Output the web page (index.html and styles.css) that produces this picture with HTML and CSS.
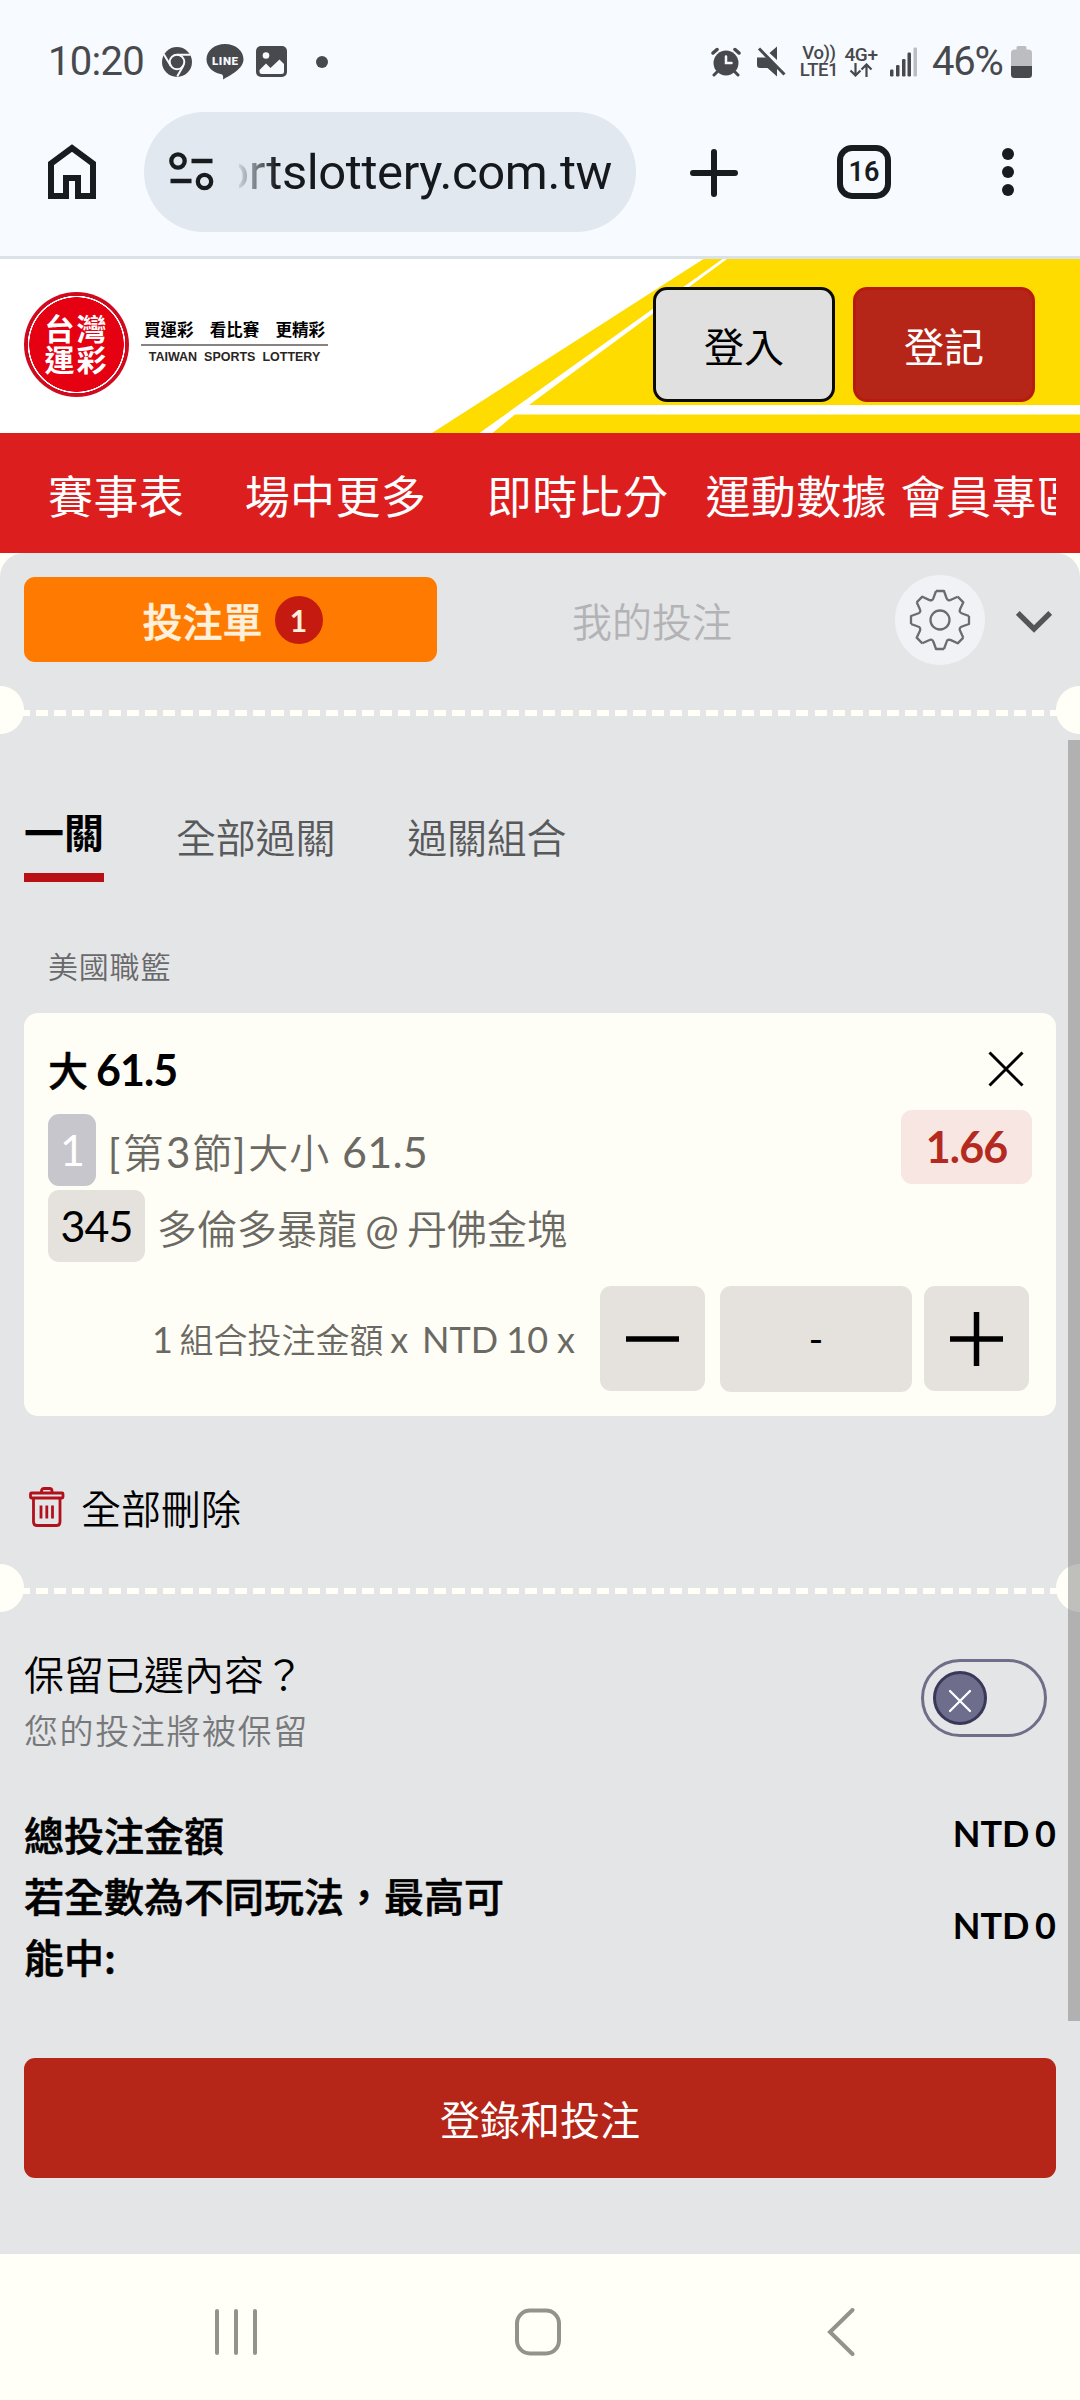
FILE: index.html
```html
<!DOCTYPE html>
<html lang="zh-Hant">
<head>
<meta charset="utf-8">
<title>台灣運彩</title>
<link rel="stylesheet" href="styles.css">
</head>
<body>
<div class="screen">
  <div class="statusbar">
    <span class="clock">10:20</span>
    <svg class="st-chrome" width="30" height="30" viewBox="0 0 30 30"><circle cx="15" cy="15" r="15" fill="#48494c"/><circle cx="15" cy="15" r="7.3" fill="none" stroke="#f7faff" stroke-width="2"/><path d="M15 7.7H28.5M8.700 18.700L1.800 7.200M21.300 18.700L15.200 29.500" stroke="#f7faff" stroke-width="2" fill="none"/></svg>
    <svg class="st-line" width="38" height="36" viewBox="0 0 38 36"><path d="M19 0C8.500 0 0.500 6.800 0.500 15.300c0 7.200 5.800 13 14 14.700 2.500.5 3 1.500 2.500 5.500C24 31.500 37.500 25 37.500 15.300 37.500 6.800 29.500 0 19 0z" fill="#48494c"/><text x="19" y="20.500" text-anchor="middle" textLength="26" class="line-word">LINE</text></svg>
    <svg class="st-photo" width="31" height="31" viewBox="0 0 31 31"><rect width="31" height="31" rx="5" fill="#48494c"/><circle cx="10" cy="9.500" r="3.300" fill="#f7faff"/><path d="M3.500 24L10 17.500l4.500 4.500 9-8.500 4.500 4.500v7.500q0 2.500-2.500 2.500h-19.500q-2.500 0-2.500-2.500z" fill="#f7faff"/></svg>
    <span class="st-dot"></span>
    <svg class="st-alarm" width="30" height="30" viewBox="0 0 30 30" fill="none" stroke="#48494c" stroke-linecap="round"><circle cx="15" cy="16" r="12.500" fill="#48494c" stroke="none"/><path d="M2 6L6 2.500M28 6L24 2.500" stroke-width="3.500"/><path d="M6 25l-3 3M24 25l3 3" stroke-width="3"/><path d="M15 9.500v6.500h5.500" stroke="#f7faff" stroke-width="2.500"/></svg>
    <svg class="st-mute" width="31" height="31" viewBox="0 0 31 31"><path d="M1 11.500h9L21 21.500v9L11.500 22H4q-3 0-3-3zM13.500 7L21 0.500V14z" fill="#48494c"/><path d="M3 2.500L28.500 28.500" stroke="#48494c" stroke-width="3"/></svg>
    <div class="st-volte"><span>Vo))</span><span>LTE1</span></div>
    <div class="st-net"><span>4G+</span><svg width="24" height="14" viewBox="0 0 24 14" fill="none" stroke="#48494c" stroke-width="2.200"><path d="M6.500 0v12M1.500 7.500l5 5 5-5M17.500 14V1.500M12.500 6.500l5-5 5 5"/></svg></div>
    <svg class="st-signal" width="28" height="30" viewBox="0 0 28 30" fill="#48494c"><rect x="0" y="22.500" width="3.500" height="7" rx="1.200"/><rect x="6" y="18" width="3.500" height="11.500" rx="1.200"/><rect x="12" y="12" width="3.500" height="17.500" rx="1.200"/><rect x="17.500" y="5.500" width="3.500" height="24" rx="1.200"/><rect x="23.500" y="0.500" width="3.500" height="29" rx="1.200" fill="#bcbdc1"/></svg>
    <span class="percent">46%</span>
    <svg class="st-batt" width="21" height="32" viewBox="0 0 21 32"><path d="M5.500 3.500V1.500q0-1.500 1.500-1.500h7q1.500 0 1.500 1.500v2h2q3.500 0 3.500 3.500v13H0V7q0-3.500 3.500-3.500z" fill="#bcbdc1"/><path d="M0 20h21v8.500q0 3.500-3.500 3.500h-14q-3.500 0-3.500-3.500z" fill="#48494c"/></svg>
  </div>

  <div class="toolbar">
    <svg class="tb-home" width="48" height="56" viewBox="0 0 48 56"><path d="M3 52V19.500L24 4l21 15.500V52H30V34H18v18z" fill="none" stroke="#191c1f" stroke-width="6"/></svg>
    <div class="omnibox">
      <svg width="46" height="40" viewBox="0 0 46 40" fill="none" stroke="#191c1f"><circle cx="9" cy="9" r="6.700" stroke-width="4.300"/><circle cx="35.500" cy="29.500" r="6.700" stroke-width="4.300"/><path d="M22.500 9h21M1.500 29h21" stroke-width="4.500"/></svg>
      <div class="url"><span>ortslottery.com.tw</span></div>
    </div>
    <svg class="tb-plus" width="48" height="48" viewBox="0 0 48 48"><path d="M24 3v42M3 24h42" stroke="#191c1f" stroke-width="6" stroke-linecap="round"/></svg>
    <div class="tab-count">16</div>
    <svg class="tb-more" width="12" height="48" viewBox="0 0 12 48" fill="#191c1f"><circle cx="6" cy="6" r="6"/><circle cx="6" cy="24" r="6"/><circle cx="6" cy="42" r="6"/></svg>
  </div>

  <header class="site-header">
    <svg class="header-art" width="648" height="174" viewBox="0 0 648 174"><path d="M0 174L271.500 0H648V174z" fill="#fedc00"/><path d="M47.500 174L290.500 0h4.500L97 146H648v9.500H83L60.500 174z" fill="#fff"/></svg>
    <div class="logo-seal"><span>台灣</span><span>運彩</span></div>
    <div class="slogan">
      <div class="slogan-zh"><span>買運彩</span><span>看比賽</span><span>更精彩</span></div>
      <div class="slogan-en">TAIWAN&nbsp; SPORTS&nbsp; LOTTERY</div>
    </div>
    <div class="auth">
      <button class="btn btn-login">登入</button>
      <button class="btn btn-register">登記</button>
    </div>
  </header>

  <nav class="main-nav">
    <div class="nav-clip">
      <a>賽事表</a><a>場中更多</a><a>即時比分</a><a>運動數據</a><a>會員專區</a>
    </div>
  </nav>

  <main class="slip-wrap">
    <div class="slip">
      <div class="slip-tabs">
        <div class="slip-tab-active">投注單<span class="count">1</span></div>
        <div class="slip-tab">我的投注</div>
        <div class="gear">
          <svg width="64" height="64" viewBox="-32 -32 64 64" fill="none" stroke="#6b6c6f" stroke-width="2.300" stroke-linejoin="round">
            <defs><path id="tooth" d="M-4-29H4L6.500-22Q8-18.500 11-20.200L17.700-23.300"/></defs>
            <use href="#tooth"/><use href="#tooth" transform="rotate(45)"/><use href="#tooth" transform="rotate(90)"/><use href="#tooth" transform="rotate(135)"/><use href="#tooth" transform="rotate(180)"/><use href="#tooth" transform="rotate(225)"/><use href="#tooth" transform="rotate(270)"/><use href="#tooth" transform="rotate(315)"/>
            <circle r="9.500"/>
          </svg>
        </div>
        <svg class="chevron" width="36" height="22" viewBox="0 0 36 22"><path d="M1.800 2L18 18 34.200 2" fill="none" stroke="#545558" stroke-width="5.300"/></svg>
      </div>

      <div class="divider"></div>

      <div class="modes">
        <span class="mode mode-on">一關</span><span class="mode">全部過關</span><span class="mode">過關組合</span>
      </div>

      <div class="league">美國職籃</div>

      <section class="card">
        <div class="card-title">
          <span class="pick">大 <b>61.5</b></span>
          <svg width="36" height="36" viewBox="0 0 36 36"><path d="M1.500 1.500l33 33M34.500 1.500l-33 33" stroke="#000" stroke-width="3"/></svg>
        </div>
        <div class="card-legs">
          <div class="legs">
            <div class="leg"><span class="tag tag-one">1</span><span class="leg-text market"><i class="bracket">[</i>第<i class="period">3</i>節<i class="bracket">]</i>大小 <i class="total-line">61.5</i></span></div>
            <div class="leg"><span class="tag tag-num">345</span><span class="leg-text teams">多倫多暴龍 <i class="at">@</i> 丹佛金塊</span></div>
          </div>
          <div class="odds">1.66</div>
        </div>
        <div class="stake">
          <div class="stake-label"><i>1</i> 組合投注金額 <i>x</i></div><div class="stake-unit">NTD 10</div><div class="stake-x">x</div>
          <div class="step minus"><svg width="53" height="54" viewBox="0 0 53 54"><path d="M0 27h53" stroke="#000" stroke-width="5.500"/></svg></div>
          <div class="amount">-</div>
          <div class="step plus"><svg width="53" height="54" viewBox="0 0 53 54"><path d="M0 27h53M26.500 0v54" stroke="#000" stroke-width="5.500"/></svg></div>
        </div>
      </section>

      <div class="clear-all">
        <svg width="36" height="40" viewBox="0 0 36 40" fill="none" stroke="#b0111a" stroke-width="2.800" stroke-linejoin="round"><rect x="1.500" y="6" width="32.500" height="5" rx="1"/><path d="M12.500 6V4q0-2.500 2.500-2.500h5.500q2.500 0 2.500 2.500v2M4.500 11v24q0 3.500 3.500 3.500h19.500q3.500 0 3.500-3.500V11M12 18.500v13M17.800 18.500v13M23.500 18.500v13"/></svg>
        <span>全部刪除</span>
      </div>

      <div class="divider"></div>

      <div class="keep">
        <div class="keep-text"><div class="keep-title">保留已選內容？</div><div class="keep-sub">您的投注將被保留</div></div>
        <div class="toggle"><div class="knob"><svg width="24" height="24" viewBox="0 0 24 24"><path d="M2 2l20 20M22 2L2 22" stroke="#fff" stroke-width="2.300" stroke-linecap="round"/></svg></div></div>
      </div>

      <div class="totals">
        <div class="total"><span class="total-label">總投注金額</span><span class="total-value">NTD 0</span></div>
        <div class="total"><span class="total-label">若全數為不同玩法，最高可能中:</span><span class="total-value">NTD 0</span></div>
      </div>

      <button class="submit">登錄和投注</button>
      <div class="scrollbar"></div>
    </div>
  </main>

  <div class="sysnav">
    <svg width="42" height="48" viewBox="0 0 42 48"><path d="M2 3v42M21 3v42M40 3v42" stroke="#93938e" stroke-width="4" stroke-linecap="round"/></svg>
    <svg width="46" height="48" viewBox="0 0 46 48"><rect x="2" y="2.500" width="42" height="43" rx="13" fill="none" stroke="#93938e" stroke-width="4"/></svg>
    <svg width="28" height="48" viewBox="0 0 28 48"><path d="M25.500 2L3 24l22.500 22" fill="none" stroke="#93938e" stroke-width="4" stroke-linecap="round"/></svg>
  </div>
</div>
</body>
</html>
```

FILE: styles.css
```css
* { box-sizing: border-box; }
body { margin: 0; background: #fffef7; }
svg { display: block; flex: none; }
i { font-style: normal; }
button { font: inherit; margin: 0; padding: 0; cursor: pointer; }

.screen {
  width: 1080px;
  height: 2400px;
  overflow: hidden;
  font-family: "Noto Sans CJK TC", "Lato", sans-serif;
  font-size: 40px;
  color: #000;
}

/* system status bar */
.statusbar {
  display: flex;
  align-items: center;
  height: 104px;
  padding: 19px 0 0 48px;
  background: #f7faff;
  color: #48494c;
  font-family: Roboto, sans-serif;
}
.clock { width: 114px; font-size: 40px; letter-spacing: -0.7px; line-height: 46px; }
.st-line { margin: 0 0 0 14px; }
.st-photo { margin-left: 12px; }
.st-dot { width: 12px; height: 12px; margin-left: 29px; border-radius: 50%; background: #48494c; }
.st-alarm { margin-left: 383px; }
.st-mute { margin-left: 15px; }
.line-word { font: 900 11.500px Roboto, sans-serif; fill: #f7faff; }
.st-volte, .st-net {
  display: flex;
  flex-direction: column;
  align-items: center;
  font-weight: 500;
  font-size: 18.500px;
  line-height: 17px;
  letter-spacing: -0.4px;
}
.st-volte { width: 38px; margin-left: 13px; }
.st-net { width: 34px; margin-left: 6px; }
.st-net span { font-size: 19px; }
.st-signal { margin-left: 12px; }
.percent { width: 81px; margin-left: 14px; font-size: 40px; letter-spacing: -1.2px; line-height: 46px; }
.st-batt { margin-left: -2px; }

/* browser toolbar */
.toolbar {
  display: flex;
  align-items: center;
  height: 155px;
  padding: 0 0 20px 48px;
  background: #f7faff;
  border-bottom: 3px solid #dbe1e9;
}
.tb-home { margin-top: 4px; }
.omnibox {
  display: flex;
  align-items: center;
  width: 492px;
  height: 120px;
  margin: 4px 0 0 48px;
  padding-left: 25px;
  border-radius: 60px;
  background: #e2e8f0;
}
.url {
  display: flex;
  justify-content: flex-end;
  width: 373px;
  margin-left: 24px;
  padding-top: 1px;
  overflow: hidden;
  color: #15181c;
  font: 400 49px/68px Roboto, sans-serif;
  letter-spacing: -0.4px;
  -webkit-mask-image: linear-gradient(90deg, rgba(0,0,0,.1), #000 38px);
  mask-image: linear-gradient(90deg, rgba(0,0,0,.1), #000 38px);
}
.tb-plus { margin: 5px 0 0 54px; }
.tab-count {
  width: 54px;
  height: 54px;
  margin: 4px 0 0 99px;
  border: 6px solid #191c1f;
  border-radius: 15px;
  color: #191c1f;
  text-align: center;
  font: 600 27px/43px Roboto, sans-serif;
}
.tb-more { margin: 4px 0 0 111px; }

/* site header */
.site-header {
  position: relative;
  display: flex;
  align-items: flex-start;
  height: 174px;
  padding-left: 24px;
  background: #fff;
}
.header-art { position: absolute; right: 0; top: 0; }
.logo-seal {
  display: flex;
  flex-direction: column;
  align-items: center;
  width: 105px;
  height: 105px;
  margin-top: 33px;
  padding-top: 20px;
  border-radius: 50%;
  background: radial-gradient(circle, #e50012 0 47px, #fff 47.500px 48.500px, #d00a1c 49px);
  color: #fff;
  font-weight: 700;
  font-size: 30px;
  line-height: 31px;
  letter-spacing: 2px;
}
.slogan { width: 187px; margin: 59px 0 0 12px; }
.slogan-zh {
  display: flex;
  justify-content: space-between;
  height: 28px;
  padding: 0 3px;
  border-bottom: 2px solid #85827f;
  font-weight: 700;
  font-size: 16.500px;
  line-height: 23px;
}
.slogan-en {
  margin-top: 4px;
  text-align: center;
  white-space: nowrap;
  color: #2a2523;
  font: 700 12.500px/15px "Liberation Sans", sans-serif;
}
.auth { position: relative; display: flex; gap: 18px; margin: 28px 0 0 325px; }
.btn {
  width: 182px;
  height: 115px;
  padding-top: 1px;
  border: 3px solid #0b0b05;
  border-radius: 14px;
  background: #e0e0e0;
  color: #000;
  font-size: 40px;
}
.btn-register { border-color: #b71b10; background: #b52619; color: #fff; }

.main-nav { height: 120px; padding: 0 24px; background: #dc1e1f; }
.nav-clip {
  display: flex;
  overflow: hidden;
  height: 120px;
  padding: 2px 0 0 24px;
  color: #fff;
  font-size: 45px;
  line-height: 120px;
  letter-spacing: 0.400px;
  white-space: nowrap;
}
.nav-clip a { flex: none; margin-right: 60.500px; }
.nav-clip a:nth-child(3) { margin-right: 37px; }
.nav-clip a:nth-child(4) { margin-right: 13.500px; }
.nav-clip a:last-child { margin-right: 0; }

/* bet slip */
.slip-wrap { background: #fffff7; }
.slip {
  position: relative;
  height: 1701px;
  padding: 24px 24px 0;
  border-radius: 24px 24px 0 0;
  background: #e4e5e7;
}
.slip-tabs { display: flex; align-items: center; height: 85px; }
.slip-tab-active {
  display: flex;
  align-items: center;
  justify-content: center;
  width: 413px;
  height: 85px;
  padding-left: 4px;
  border-radius: 11px;
  background: #ff7a00;
  color: #fff0dc;
  font-weight: 500;
  -webkit-text-stroke: 0.600px;
}
.count {
  width: 48px;
  height: 48px;
  margin-left: 12px;
  border-radius: 50%;
  background: #c51a0f;
  text-align: center;
  font: 700 30px/48px Lato, sans-serif;
  -webkit-text-stroke: 0;
}
.slip-tab { width: 458px; padding-left: 135px; color: #b3b3b5; font-weight: 350; }
.gear {
  display: flex;
  align-items: center;
  justify-content: center;
  width: 90px;
  height: 90px;
  border-radius: 50%;
  background: #f1f2f5;
}
.chevron { margin: 5px 0 0 31px; }

.divider {
  height: 48px;
  margin: 24px -24px 0;
  background:
    radial-gradient(circle at 0 50%, #fffff7 23.500px, transparent 24.500px),
    radial-gradient(circle at 100% 50%, #fffff7 23.500px, transparent 24.500px),
    repeating-linear-gradient(90deg, #fffff7 0 12px, transparent 12px 18.100px) 0 24px / 100% 6px no-repeat;
}

.modes { display: flex; gap: 72px; height: 82px; margin-top: 66px; color: #58595b; }
.mode { line-height: 72px; font-weight: 350; letter-spacing: -0.200px; }
.mode-on { border-bottom: 9px solid #b91016; color: #000; font-weight: 700; line-height: 63px; letter-spacing: 0; }
.league {
  margin: 59px 0 0 24px;
  color: #68696b;
  font-weight: 350;
  font-size: 30px;
  line-height: 48px;
  letter-spacing: 0.8px;
}

.card {
  height: 403px;
  margin-top: 24px;
  padding: 24px 24px 0;
  border-radius: 14px;
  background: #fffef6;
  font-family: Lato, "Noto Sans CJK TC", sans-serif;
}
.card-title {
  display: flex;
  align-items: center;
  justify-content: space-between;
  height: 63px;
  padding-right: 8px;
}
.pick { font-weight: 500; word-spacing: -2px; -webkit-text-stroke: 0.500px; }
.pick b { font-weight: 700; font-size: 43px; letter-spacing: -1px; -webkit-text-stroke: 0; }
.card-legs { display: flex; justify-content: space-between; margin-top: 10px; }
.legs { display: flex; flex-direction: column; gap: 4px; padding-top: 4px; }
.leg { display: flex; align-items: center; height: 72px; }
.tag {
  height: 72px;
  border-radius: 11px;
  text-align: center;
  font-size: 43px;
  line-height: 72px;
  letter-spacing: -1px;
}
.tag-one { width: 48px; background: #c7c6cc; color: #fff; }
.tag-num { width: 97px; background: #e5e2dd; }
.leg-text { margin: 2px 0 0 12px; color: #6b6963; font-weight: 350; white-space: pre; }
.leg-text i { font-size: 43px; font-weight: 400; }
.market { letter-spacing: 0.900px; }
.leg-text .total-line { letter-spacing: 0.300px; }
.teams { word-spacing: -2.600px; }
.leg-text .at { font-size: 40px; }
.leg-text .period { padding: 0 1px 0 2px; font-size: 42px; }
.leg-text .bracket { padding-right: 2px; font-size: 40px; }
.odds {
  width: 131px;
  height: 74px;
  border-radius: 11px;
  background: #f7e6e1;
  color: #b52a20;
  text-align: center;
  font-weight: 700;
  font-size: 43px;
  line-height: 74px;
  letter-spacing: -0.900px;
}
.stake { display: flex; align-items: flex-start; height: 106px; margin-top: 24px; color: #6b6963; line-height: 107px; }
.stake > * { flex: none; white-space: nowrap; }
.stake-label { width: 270px; margin-left: 104px; font-size: 34px; font-weight: 350; word-spacing: -2.500px; }
.stake-label i { font-size: 36px; font-weight: 400; }
.stake-unit { width: 135px; font-size: 36px; word-spacing: -1px; }
.stake-x { width: 43px; font-size: 36px; }
.step {
  display: flex;
  align-items: center;
  justify-content: center;
  width: 105px;
  height: 105px;
  border-radius: 11px;
  background: #e5e2dd;
}
.amount {
  width: 192px;
  height: 106px;
  margin: 0 12px 0 15px;
  border-radius: 11px;
  background: #e5e2dd;
  color: #000;
  text-align: center;
  line-height: 106px;
}

.clear-all { display: flex; align-items: center; height: 60px; margin: 61px 0 27px 5px; font-weight: 350; }
.clear-all span { margin-left: 16px; line-height: 60px; }
.clear-all + .divider { margin-top: 0; }

.keep { display: flex; justify-content: space-between; margin-top: 33px; }
.keep-title { line-height: 56px; font-weight: 350; }
.keep-sub { color: #77787a; font-weight: 350; font-size: 34px; line-height: 58px; letter-spacing: 1.600px; }
.toggle {
  width: 126px;
  height: 78px;
  margin: 14px 9px 0 0;
  padding: 9px;
  border: 3px solid #6f6e88;
  border-radius: 39px;
}
.knob {
  width: 54px;
  height: 54px;
  padding: 15px 0 0 12px;
  border: 3px solid #393858;
  border-radius: 50%;
  background: #6e6d8c;
}

.totals { margin-top: 45px; font-weight: 500; }
.total { display: flex; align-items: center; justify-content: space-between; }
.total-label { width: 490px; line-height: 61px; -webkit-text-stroke: 0.600px; }
.total-value { padding-bottom: 2px; font: 700 36px/59px Lato, sans-serif; word-spacing: -3px; }

.submit {
  width: 1032px;
  height: 120px;
  margin-top: 71px;
  border: 0;
  border-radius: 11px;
  background: #b52619;
  color: #fff;
  font-size: 40px;
}
.scrollbar {
  position: absolute;
  right: 0;
  top: 187px;
  width: 12px;
  height: 1281px;
  background: rgba(122, 122, 122, .48);
}

/* system navigation */
.sysnav {
  display: flex;
  align-items: center;
  height: 146px;
  padding: 10px 0 0 215px;
  gap: 258px;
  background: #fffef7;
}
.sysnav svg:last-child { margin-left: 8px; }
```
